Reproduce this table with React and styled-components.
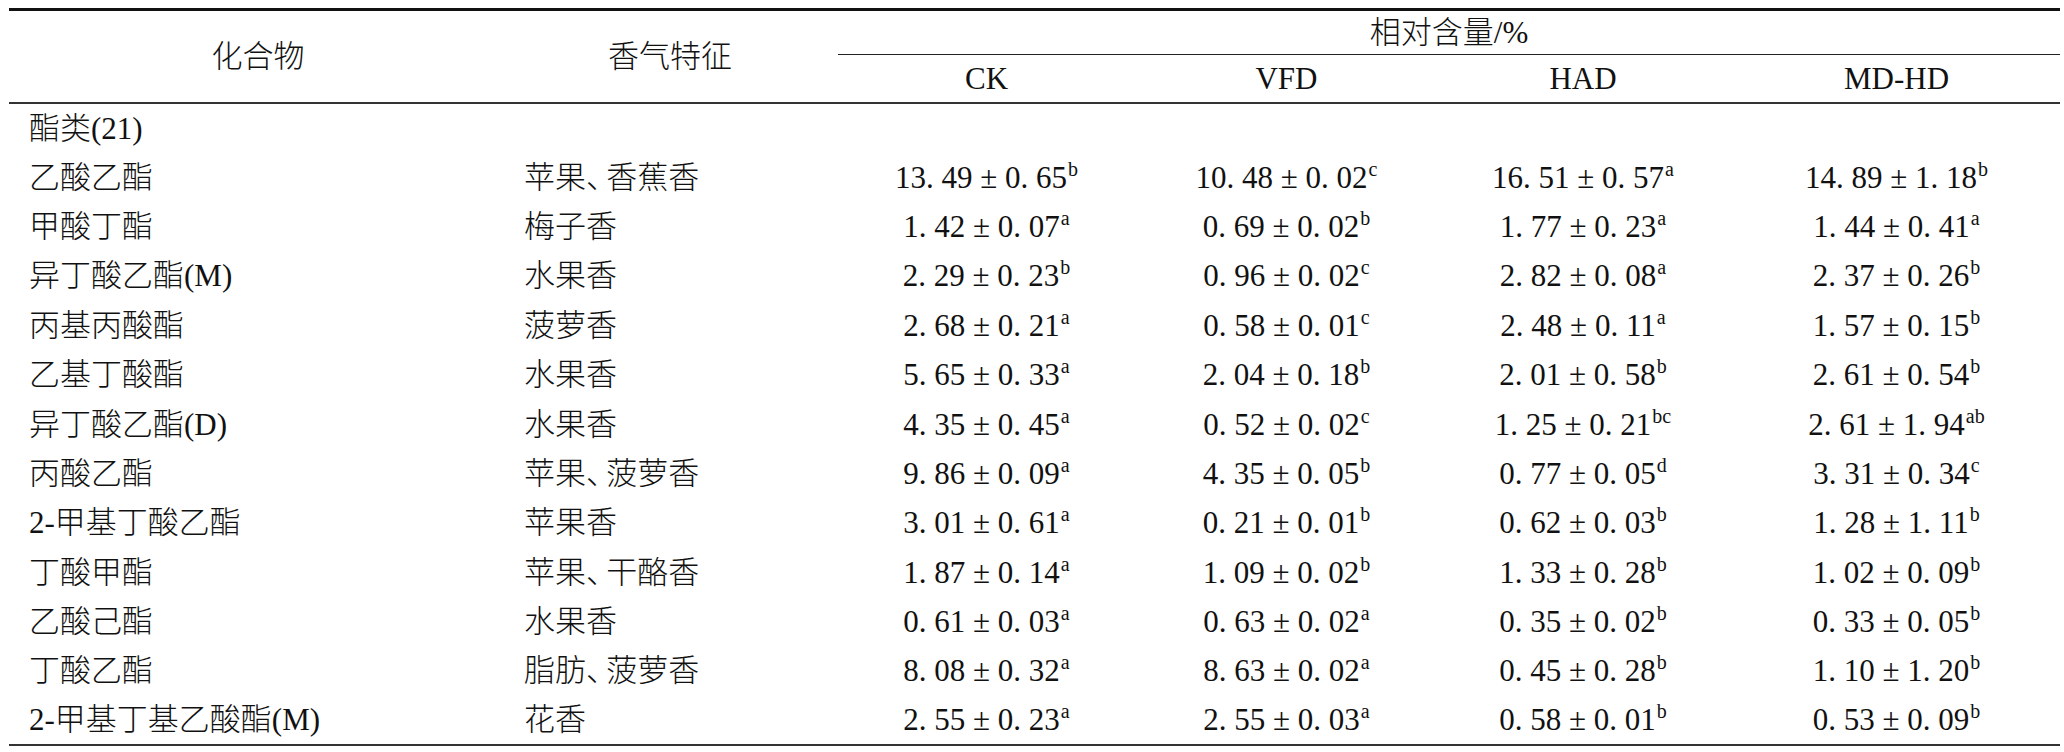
import styled, { createGlobalStyle } from 'styled-components';

const GlobalStyle = createGlobalStyle`
	html, body {
		margin: 0;
		background: #fff;
	}
`;

const COLUMNS = [
	{ key: 'compound', width: 498 },
	{ key: 'aroma', width: 326 },
	{ key: 'ck', width: 307 },
	{ key: 'vfd', width: 293 },
	{ key: 'had', width: 300 },
	{ key: 'mdhd', width: 327 },
];

const ROWS = [
	['乙酸乙酯', '苹果、香蕉香', ['13.49', '0.65', 'b'], ['10.48', '0.02', 'c'], ['16.51', '0.57', 'a'], ['14.89', '1.18', 'b']],
	['甲酸丁酯', '梅子香', ['1.42', '0.07', 'a'], ['0.69', '0.02', 'b'], ['1.77', '0.23', 'a'], ['1.44', '0.41', 'a']],
	['异丁酸乙酯(M)', '水果香', ['2.29', '0.23', 'b'], ['0.96', '0.02', 'c'], ['2.82', '0.08', 'a'], ['2.37', '0.26', 'b']],
	['丙基丙酸酯', '菠萝香', ['2.68', '0.21', 'a'], ['0.58', '0.01', 'c'], ['2.48', '0.11', 'a'], ['1.57', '0.15', 'b']],
	['乙基丁酸酯', '水果香', ['5.65', '0.33', 'a'], ['2.04', '0.18', 'b'], ['2.01', '0.58', 'b'], ['2.61', '0.54', 'b']],
	['异丁酸乙酯(D)', '水果香', ['4.35', '0.45', 'a'], ['0.52', '0.02', 'c'], ['1.25', '0.21', 'bc'], ['2.61', '1.94', 'ab']],
	['丙酸乙酯', '苹果、菠萝香', ['9.86', '0.09', 'a'], ['4.35', '0.05', 'b'], ['0.77', '0.05', 'd'], ['3.31', '0.34', 'c']],
	['2-甲基丁酸乙酯', '苹果香', ['3.01', '0.61', 'a'], ['0.21', '0.01', 'b'], ['0.62', '0.03', 'b'], ['1.28', '1.11', 'b']],
	['丁酸甲酯', '苹果、干酪香', ['1.87', '0.14', 'a'], ['1.09', '0.02', 'b'], ['1.33', '0.28', 'b'], ['1.02', '0.09', 'b']],
	['乙酸己酯', '水果香', ['0.61', '0.03', 'a'], ['0.63', '0.02', 'a'], ['0.35', '0.02', 'b'], ['0.33', '0.05', 'b']],
	['丁酸乙酯', '脂肪、菠萝香', ['8.08', '0.32', 'a'], ['8.63', '0.02', 'a'], ['0.45', '0.28', 'b'], ['1.10', '1.20', 'b']],
	['2-甲基丁基乙酸酯(M)', '花香', ['2.55', '0.23', 'a'], ['2.55', '0.03', 'a'], ['0.58', '0.01', 'b'], ['0.53', '0.09', 'b']],
];

const Page = styled.div`
	padding: 8px 4px 0 9px;
	color: #111;
	font-family: 'Liberation Serif', 'Noto Sans CJK SC', serif;
`;

const Table = styled.table`
	width: 2051px;
	border-collapse: collapse;
	table-layout: fixed;
	border-top: 3px solid #111;
	border-bottom: 2px solid #333;
	font-size: 31px;
	font-weight: 300;
`;

const HeadCell = styled.th`
	font-weight: 300;
	padding: 0;
	height: ${({ $height }) => $height}px;
	text-align: center;
	vertical-align: middle;
	line-height: 1;
`;

const GroupLabel = styled.div`
	margin-left: 5px;
	height: 43px;
	display: flex;
	align-items: center;
	justify-content: center;
	border-bottom: 1.5px solid #222;
`;

const Head = styled.thead`
	border-bottom: 2px solid #333;
`;

const Row = styled.tr`
	height: 49.4px;
`;

const Cell = styled.td`
	padding: 0 0 0 ${({ $indent }) => $indent || 0}px;
	text-align: ${({ $align }) => $align || 'left'};
	vertical-align: middle;
	white-space: nowrap;
	line-height: 1;
`;

const Mark = styled.sup`
	font-size: 20px;
	vertical-align: 12px;
	line-height: 0;
	margin-left: 1px;
`;

const Comma = styled.span`
	letter-spacing: -0.4em;
	padding-right: 0.05em;
`;

const Aroma = ({ text }) =>
	text.split('、').map((part, i) => (
		<span key={i}>
			{i > 0 && <Comma>、</Comma>}
			{part}
		</span>
	));

const Value = ({ data }) => {
	const [mean, sd, mark] = data;
	const spaced = (n) => n.replace('.', '. ');
	return (
		<>
			{spaced(mean)} ± {spaced(sd)}
			<Mark>{mark}</Mark>
		</>
	);
};

export default function App() {
	return (
		<Page>
			<GlobalStyle />
			<Table>
				<colgroup>
					{COLUMNS.map(({ key, width }) => (
						<col key={key} style={{ width }} />
					))}
				</colgroup>
				<Head>
					<tr>
						<HeadCell rowSpan={2} $height={44}>
							化合物
						</HeadCell>
						<HeadCell rowSpan={2} $height={44}>
							香气特征
						</HeadCell>
						<HeadCell colSpan={4} $height={44}>
							<GroupLabel>相对含量/%</GroupLabel>
						</HeadCell>
					</tr>
					<tr>
						<HeadCell $height={47}>CK</HeadCell>
						<HeadCell $height={47}>VFD</HeadCell>
						<HeadCell $height={47}>HAD</HeadCell>
						<HeadCell $height={47}>MD-HD</HeadCell>
					</tr>
				</Head>
				<tbody>
					<Row>
						<Cell $indent={20}>酯类(21)</Cell>
						<Cell colSpan={5} />
					</Row>
					{ROWS.map(([name, aroma, ...values]) => (
						<Row key={name}>
							<Cell $indent={20}>{name}</Cell>
							<Cell $indent={17}>
								<Aroma text={aroma} />
							</Cell>
							{values.map((v, i) => (
								<Cell key={i} $align="center">
									<Value data={v} />
								</Cell>
							))}
						</Row>
					))}
				</tbody>
			</Table>
		</Page>
	);
}
